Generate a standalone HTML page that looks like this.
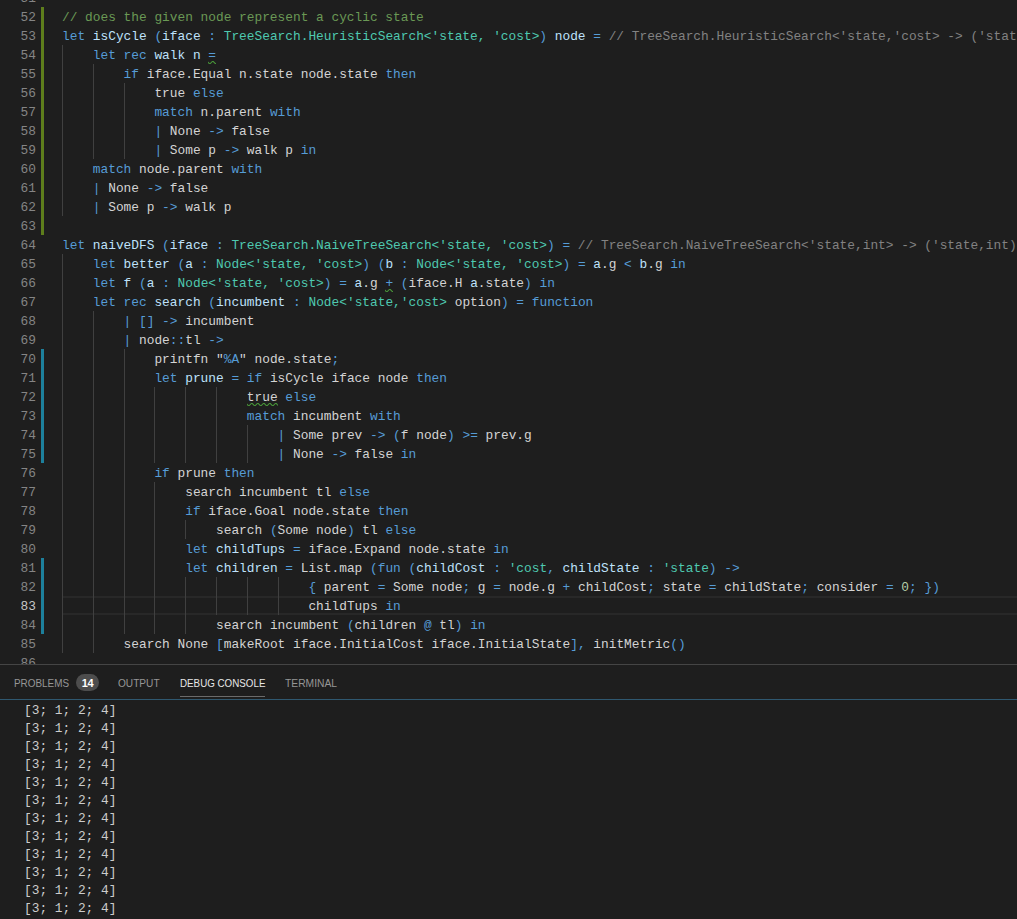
<!DOCTYPE html>
<html><head><meta charset="utf-8"><style>
*{margin:0;padding:0;box-sizing:border-box}
html,body{width:1017px;height:919px;overflow:hidden;background:#1e1e1e}
body{position:relative;font-family:"Liberation Mono",monospace}
.ed{position:absolute;left:0;top:0;width:1017px;height:664px;overflow:hidden}
.ln{position:absolute;left:0;width:36px;text-align:right;color:#858585;font-size:12.83px;line-height:19px;height:19px;white-space:pre}
.ln.act{color:#c6c6c6}
.cl{position:absolute;left:62.0px;font-size:12.83px;line-height:19px;height:19px;white-space:pre;color:#d4d4d4}
.g{position:absolute;width:1px;background:#404040}
.bar{position:absolute;left:41px;width:3px}
.k{color:#569cd6} .p{color:#569cd6} .t{color:#4ec9b0} .d{color:#bfe2fb} .n{color:#d4d4d4}
.c{color:#6a9955} .l{color:#828282} .num{color:#b5cea8}
.cur{position:absolute;left:62px;width:960px;height:19px;border-top:2px solid #282828;border-bottom:2px solid #282828}
.panel{position:absolute;left:0;top:664px;width:1017px;height:255px;border-top:1px solid #454545;background:#1e1e1e}
.tab{position:absolute;top:12px;font-family:"Liberation Sans",sans-serif;font-size:11px;color:#969696;transform:scaleX(0.9);transform-origin:0 0;white-space:nowrap}
.out{position:absolute;left:24px;font-size:12.83px;line-height:18px;color:#cccccc;white-space:pre}
</style></head><body>
<div class="ed"><div class="bar" style="top:7px;height:228px;background:#5e7e1c"></div><div class="bar" style="top:349px;height:114px;background:#1d809c"></div><div class="bar" style="top:558px;height:76px;background:#1d809c"></div><div class="cur" style="top:596px"></div><div class="g" style="left:62px;top:45px;height:171px"></div><div class="g" style="left:62px;top:254px;height:399px"></div><div class="g" style="left:93px;top:64px;height:95px"></div><div class="g" style="left:93px;top:311px;height:342px"></div><div class="g" style="left:124px;top:83px;height:76px"></div><div class="g" style="left:124px;top:349px;height:285px"></div><div class="g" style="left:154px;top:387px;height:76px"></div><div class="g" style="left:154px;top:482px;height:152px"></div><div class="g" style="left:185px;top:387px;height:76px"></div><div class="g" style="left:185px;top:520px;height:19px"></div><div class="g" style="left:185px;top:577px;height:57px"></div><div class="g" style="left:216px;top:387px;height:76px"></div><div class="g" style="left:216px;top:577px;height:38px"></div><div class="g" style="left:247px;top:425px;height:38px"></div><div class="g" style="left:247px;top:577px;height:38px"></div><div class="g" style="left:278px;top:577px;height:38px"></div><div class="ln" style="top:-11px">51</div><div class="ln" style="top:8px">52</div><div class="ln" style="top:27px">53</div><div class="ln" style="top:46px">54</div><div class="ln" style="top:65px">55</div><div class="ln" style="top:84px">56</div><div class="ln" style="top:103px">57</div><div class="ln" style="top:122px">58</div><div class="ln" style="top:141px">59</div><div class="ln" style="top:160px">60</div><div class="ln" style="top:179px">61</div><div class="ln" style="top:198px">62</div><div class="ln" style="top:217px">63</div><div class="ln" style="top:236px">64</div><div class="ln" style="top:255px">65</div><div class="ln" style="top:274px">66</div><div class="ln" style="top:293px">67</div><div class="ln" style="top:312px">68</div><div class="ln" style="top:331px">69</div><div class="ln" style="top:350px">70</div><div class="ln" style="top:369px">71</div><div class="ln" style="top:388px">72</div><div class="ln" style="top:407px">73</div><div class="ln" style="top:426px">74</div><div class="ln" style="top:445px">75</div><div class="ln" style="top:464px">76</div><div class="ln" style="top:483px">77</div><div class="ln" style="top:502px">78</div><div class="ln" style="top:521px">79</div><div class="ln" style="top:540px">80</div><div class="ln" style="top:559px">81</div><div class="ln" style="top:578px">82</div><div class="ln act" style="top:597px">83</div><div class="ln" style="top:616px">84</div><div class="ln" style="top:635px">85</div><div class="ln" style="top:654px">86</div><div class="cl" style="top:8px;left:62.00px"><span class="c">// does the given node represent a cyclic state</span></div><div class="cl" style="top:27px;left:62.00px"><span class="k">let</span> <span class="d">isCycle</span> <span class="p">(</span><span class="d">iface</span> <span class="p">:</span> <span class="t">TreeSearch.HeuristicSearch&lt;&#x27;state, &#x27;cost&gt;</span><span class="p">)</span> <span class="d">node</span> <span class="p">=</span> <span class="l">// TreeSearch.HeuristicSearch&lt;&#x27;state,&#x27;cost&gt; -&gt; (&#x27;state,&#x27;cost) -&gt; bool</span></div><div class="cl" style="top:46px;left:92.80px"><span class="k">let</span> <span class="k">rec</span> <span class="d">walk</span> <span class="d">n</span> <span class="p">=</span></div><div class="cl" style="top:65px;left:123.60px"><span class="k">if</span> <span class="n">iface</span><span class="n">.</span><span class="n">Equal</span> <span class="n">n</span><span class="n">.</span><span class="n">state</span> <span class="n">node</span><span class="n">.</span><span class="n">state</span> <span class="k">then</span></div><div class="cl" style="top:84px;left:154.40px"><span class="n">true</span> <span class="k">else</span></div><div class="cl" style="top:103px;left:154.40px"><span class="k">match</span> <span class="n">n</span><span class="n">.</span><span class="n">parent</span> <span class="k">with</span></div><div class="cl" style="top:122px;left:154.40px"><span class="p">|</span> <span class="n">None</span> <span class="p">-</span><span class="p">&gt;</span> <span class="n">false</span></div><div class="cl" style="top:141px;left:154.40px"><span class="p">|</span> <span class="n">Some</span> <span class="n">p</span> <span class="p">-</span><span class="p">&gt;</span> <span class="n">walk</span> <span class="n">p</span> <span class="k">in</span></div><div class="cl" style="top:160px;left:92.80px"><span class="k">match</span> <span class="n">node</span><span class="n">.</span><span class="n">parent</span> <span class="k">with</span></div><div class="cl" style="top:179px;left:92.80px"><span class="p">|</span> <span class="n">None</span> <span class="p">-</span><span class="p">&gt;</span> <span class="n">false</span></div><div class="cl" style="top:198px;left:92.80px"><span class="p">|</span> <span class="n">Some</span> <span class="n">p</span> <span class="p">-</span><span class="p">&gt;</span> <span class="n">walk</span> <span class="n">p</span></div><div class="cl" style="top:236px;left:62.00px"><span class="k">let</span> <span class="d">naiveDFS</span> <span class="p">(</span><span class="d">iface</span> <span class="p">:</span> <span class="t">TreeSearch.NaiveTreeSearch&lt;&#x27;state, &#x27;cost&gt;</span><span class="p">)</span> <span class="p">=</span> <span class="l">// TreeSearch.NaiveTreeSearch&lt;&#x27;state,int&gt; -&gt; (&#x27;state,int) option</span></div><div class="cl" style="top:255px;left:92.80px"><span class="k">let</span> <span class="d">better</span> <span class="p">(</span><span class="d">a</span> <span class="p">:</span> <span class="t">Node&lt;&#x27;state, &#x27;cost&gt;</span><span class="p">)</span> <span class="p">(</span><span class="d">b</span> <span class="p">:</span> <span class="t">Node&lt;&#x27;state, &#x27;cost&gt;</span><span class="p">)</span> <span class="p">=</span> <span class="d">a</span><span class="n">.</span><span class="n">g</span> <span class="p">&lt;</span> <span class="d">b</span><span class="n">.</span><span class="n">g</span> <span class="k">in</span></div><div class="cl" style="top:274px;left:92.80px"><span class="k">let</span> <span class="d">f</span> <span class="p">(</span><span class="d">a</span> <span class="p">:</span> <span class="t">Node&lt;&#x27;state, &#x27;cost&gt;</span><span class="p">)</span> <span class="p">=</span> <span class="d">a</span><span class="n">.</span><span class="n">g</span> <span class="p">+</span> <span class="p">(</span><span class="n">iface</span><span class="n">.</span><span class="n">H</span> <span class="d">a</span><span class="n">.</span><span class="n">state</span><span class="p">)</span> <span class="k">in</span></div><div class="cl" style="top:293px;left:92.80px"><span class="k">let</span> <span class="k">rec</span> <span class="d">search</span> <span class="p">(</span><span class="d">incumbent</span> <span class="p">:</span> <span class="t">Node&lt;&#x27;state,&#x27;cost&gt;</span> <span class="n">option</span><span class="p">)</span> <span class="p">=</span> <span class="k">function</span></div><div class="cl" style="top:312px;left:123.60px"><span class="p">|</span> <span class="p">[</span><span class="p">]</span> <span class="p">-</span><span class="p">&gt;</span> <span class="n">incumbent</span></div><div class="cl" style="top:331px;left:123.60px"><span class="p">|</span> <span class="n">node</span><span class="p">:</span><span class="p">:</span><span class="n">tl</span> <span class="p">-</span><span class="p">&gt;</span></div><div class="cl" style="top:350px;left:154.40px"><span class="n">printfn</span> <span class="n">&quot;</span><span class="k">%A</span><span class="n">&quot;</span> <span class="n">node</span><span class="n">.</span><span class="n">state</span><span class="p">;</span></div><div class="cl" style="top:369px;left:154.40px"><span class="k">let</span> <span class="d">prune</span> <span class="p">=</span> <span class="k">if</span> <span class="n">isCycle</span> <span class="n">iface</span> <span class="n">node</span> <span class="k">then</span></div><div class="cl" style="top:388px;left:246.80px"><span class="n">true</span> <span class="k">else</span></div><div class="cl" style="top:407px;left:246.80px"><span class="k">match</span> <span class="n">incumbent</span> <span class="k">with</span></div><div class="cl" style="top:426px;left:277.60px"><span class="p">|</span> <span class="n">Some</span> <span class="n">prev</span> <span class="p">-</span><span class="p">&gt;</span> <span class="p">(</span><span class="n">f</span> <span class="n">node</span><span class="p">)</span> <span class="p">&gt;</span><span class="p">=</span> <span class="n">prev</span><span class="n">.</span><span class="n">g</span></div><div class="cl" style="top:445px;left:277.60px"><span class="p">|</span> <span class="n">None</span> <span class="p">-</span><span class="p">&gt;</span> <span class="n">false</span> <span class="k">in</span></div><div class="cl" style="top:464px;left:154.40px"><span class="k">if</span> <span class="n">prune</span> <span class="k">then</span></div><div class="cl" style="top:483px;left:185.20px"><span class="n">search</span> <span class="n">incumbent</span> <span class="n">tl</span> <span class="k">else</span></div><div class="cl" style="top:502px;left:185.20px"><span class="k">if</span> <span class="n">iface</span><span class="n">.</span><span class="n">Goal</span> <span class="n">node</span><span class="n">.</span><span class="n">state</span> <span class="k">then</span></div><div class="cl" style="top:521px;left:216.00px"><span class="n">search</span> <span class="p">(</span><span class="n">Some</span> <span class="n">node</span><span class="p">)</span> <span class="n">tl</span> <span class="k">else</span></div><div class="cl" style="top:540px;left:185.20px"><span class="k">let</span> <span class="d">childTups</span> <span class="p">=</span> <span class="n">iface</span><span class="n">.</span><span class="n">Expand</span> <span class="n">node</span><span class="n">.</span><span class="n">state</span> <span class="k">in</span></div><div class="cl" style="top:559px;left:185.20px"><span class="k">let</span> <span class="d">children</span> <span class="p">=</span> <span class="n">List</span><span class="n">.</span><span class="n">map</span> <span class="p">(</span><span class="k">fun</span> <span class="p">(</span><span class="d">childCost</span> <span class="p">:</span> <span class="t">&#x27;cost</span><span class="p">,</span> <span class="d">childState</span> <span class="p">:</span> <span class="t">&#x27;state</span><span class="p">)</span> <span class="p">-</span><span class="p">&gt;</span></div><div class="cl" style="top:578px;left:308.40px"><span class="p">{</span> <span class="n">parent</span> <span class="p">=</span> <span class="n">Some</span> <span class="n">node</span><span class="p">;</span> <span class="n">g</span> <span class="p">=</span> <span class="n">node</span><span class="n">.</span><span class="n">g</span> <span class="p">+</span> <span class="n">childCost</span><span class="p">;</span> <span class="n">state</span> <span class="p">=</span> <span class="n">childState</span><span class="p">;</span> <span class="n">consider</span> <span class="p">=</span> <span class="num">0</span><span class="p">;</span> <span class="p">}</span><span class="p">)</span></div><div class="cl" style="top:597px;left:308.40px"><span class="n">childTups</span> <span class="k">in</span></div><div class="cl" style="top:616px;left:216.00px"><span class="n">search</span> <span class="n">incumbent</span> <span class="p">(</span><span class="n">children</span> <span class="p">@</span> <span class="n">tl</span><span class="p">)</span> <span class="k">in</span></div><div class="cl" style="top:635px;left:123.60px"><span class="n">search</span> <span class="n">None</span> <span class="p">[</span><span class="n">makeRoot</span> <span class="n">iface</span><span class="n">.</span><span class="n">InitialCost</span> <span class="n">iface</span><span class="n">.</span><span class="n">InitialState</span><span class="p">]</span><span class="p">,</span> <span class="n">initMetric</span><span class="p">(</span><span class="p">)</span></div><svg style="position:absolute;left:208.30px;top:61px" width="7.7" height="3"><g fill="#4a9a3a"><polygon points="5.5,0 2.5,3 1.1,3 4.1,0"/><polygon points="4,0 6,2 6,0.6 5.4,0"/><polygon points="0,2 1,3 2.4,3 0,0.6"/><polygon points="11.5,0 8.5,3 7.1,3 10.1,0"/><polygon points="10,0 12,2 12,0.6 11.4,0"/><polygon points="6,2 7,3 8.4,3 6,0.6"/></g></svg><svg style="position:absolute;left:385.40px;top:289px" width="7.7" height="3"><g fill="#4a9a3a"><polygon points="5.5,0 2.5,3 1.1,3 4.1,0"/><polygon points="4,0 6,2 6,0.6 5.4,0"/><polygon points="0,2 1,3 2.4,3 0,0.6"/><polygon points="11.5,0 8.5,3 7.1,3 10.1,0"/><polygon points="10,0 12,2 12,0.6 11.4,0"/><polygon points="6,2 7,3 8.4,3 6,0.6"/></g></svg><svg style="position:absolute;left:246.80px;top:403px" width="30.8" height="3"><g fill="#4a9a3a"><polygon points="5.5,0 2.5,3 1.1,3 4.1,0"/><polygon points="4,0 6,2 6,0.6 5.4,0"/><polygon points="0,2 1,3 2.4,3 0,0.6"/><polygon points="11.5,0 8.5,3 7.1,3 10.1,0"/><polygon points="10,0 12,2 12,0.6 11.4,0"/><polygon points="6,2 7,3 8.4,3 6,0.6"/><polygon points="17.5,0 14.5,3 13.1,3 16.1,0"/><polygon points="16,0 18,2 18,0.6 17.4,0"/><polygon points="12,2 13,3 14.4,3 12,0.6"/><polygon points="23.5,0 20.5,3 19.1,3 22.1,0"/><polygon points="22,0 24,2 24,0.6 23.4,0"/><polygon points="18,2 19,3 20.4,3 18,0.6"/><polygon points="29.5,0 26.5,3 25.1,3 28.1,0"/><polygon points="28,0 30,2 30,0.6 29.4,0"/><polygon points="24,2 25,3 26.4,3 24,0.6"/><polygon points="35.5,0 32.5,3 31.1,3 34.1,0"/><polygon points="34,0 36,2 36,0.6 35.4,0"/><polygon points="30,2 31,3 32.4,3 30,0.6"/></g></svg></div><div class="panel"><div class="tab" style="left:14px">PROBLEMS</div><div style="position:absolute;left:76px;top:9px;width:23px;height:17px;border-radius:9px;background:#4d4d4d;color:#fff;font-family:'Liberation Sans',sans-serif;font-weight:bold;font-size:11px;line-height:18px;text-align:center;letter-spacing:-0.3px">14</div><div class="tab" style="left:118px;transform:scaleX(0.92)">OUTPUT</div><div class="tab" style="left:180px;color:#e7e7e7;transform:scaleX(0.89)">DEBUG CONSOLE</div><div style="position:absolute;left:180px;top:31px;width:85px;height:1px;background:#6b6b6b"></div><div class="tab" style="left:285px;transform:scaleX(0.935)">TERMINAL</div><div style="position:absolute;left:0;top:34px;width:1017px;height:1px;background:#2f5870"></div><div class="out" style="top:37px">[3; 1; 2; 4]</div><div class="out" style="top:55px">[3; 1; 2; 4]</div><div class="out" style="top:73px">[3; 1; 2; 4]</div><div class="out" style="top:91px">[3; 1; 2; 4]</div><div class="out" style="top:109px">[3; 1; 2; 4]</div><div class="out" style="top:127px">[3; 1; 2; 4]</div><div class="out" style="top:145px">[3; 1; 2; 4]</div><div class="out" style="top:163px">[3; 1; 2; 4]</div><div class="out" style="top:181px">[3; 1; 2; 4]</div><div class="out" style="top:199px">[3; 1; 2; 4]</div><div class="out" style="top:217px">[3; 1; 2; 4]</div><div class="out" style="top:235px">[3; 1; 2; 4]</div></div>
</body></html>
